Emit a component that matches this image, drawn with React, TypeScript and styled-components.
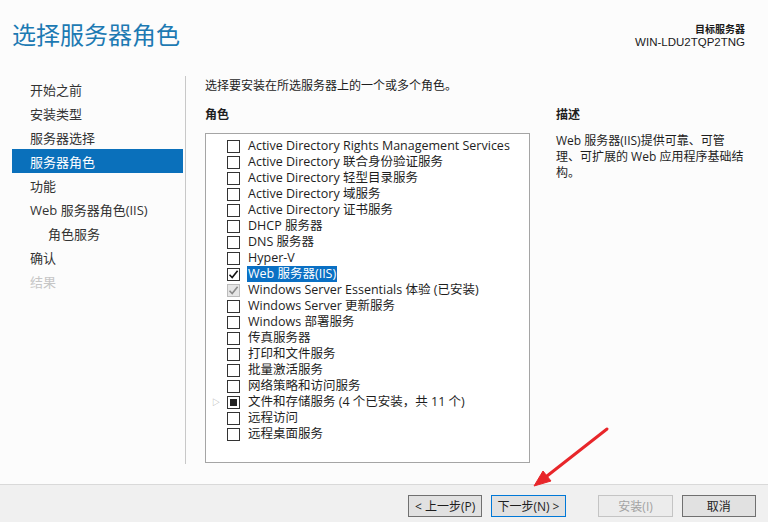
import styled, { createGlobalStyle } from 'styled-components';

const GlobalStyle = createGlobalStyle`
  html, body {
    margin: 0;
    padding: 0;
    background: #fcfcfc;
  }
  body {
    font-family: "Open Sans", "Noto Sans CJK SC", sans-serif;
    color: #1e1e1e;
  }
`;

type CheckState = 'off' | 'on' | 'installed' | 'partial';

interface Role {
  label: string;
  state: CheckState;
  selected?: boolean;
  expandable?: boolean;
}

const roles: Role[] = [
  { label: 'Active Directory Rights Management Services', state: 'off' },
  { label: 'Active Directory 联合身份验证服务', state: 'off' },
  { label: 'Active Directory 轻型目录服务', state: 'off' },
  { label: 'Active Directory 域服务', state: 'off' },
  { label: 'Active Directory 证书服务', state: 'off' },
  { label: 'DHCP 服务器', state: 'off' },
  { label: 'DNS 服务器', state: 'off' },
  { label: 'Hyper-V', state: 'off' },
  { label: 'Web 服务器(IIS)', state: 'on', selected: true },
  { label: 'Windows Server Essentials 体验 (已安装)', state: 'installed' },
  { label: 'Windows Server 更新服务', state: 'off' },
  { label: 'Windows 部署服务', state: 'off' },
  { label: '传真服务器', state: 'off' },
  { label: '打印和文件服务', state: 'off' },
  { label: '批量激活服务', state: 'off' },
  { label: '网络策略和访问服务', state: 'off' },
  { label: '文件和存储服务 (4 个已安装，共 11 个)', state: 'partial', expandable: true },
  { label: '远程访问', state: 'off' },
  { label: '远程桌面服务', state: 'off' },
];

const navItems = [
  { label: '开始之前' },
  { label: '安装类型' },
  { label: '服务器选择' },
  { label: '服务器角色', active: true },
  { label: '功能' },
  { label: 'Web 服务器角色(IIS)' },
  { label: '角色服务', sub: true },
  { label: '确认' },
  { label: '结果', disabled: true },
];

function CheckMark({ color }: { color: string }) {
  return (
    <svg width="11" height="11" viewBox="0 0 11 11">
      <path d="M1.5 5.8 L4.2 8.6 L9.6 1.8" fill="none" stroke={color} strokeWidth="1.6" />
    </svg>
  );
}

export default function App() {
  return (
    <>
      <GlobalStyle />
      <Window>
        <Header>
          <Title>选择服务器角色</Title>
          <Target>
            <TargetLabel>目标服务器</TargetLabel>
            <TargetName>WIN-LDU2TQP2TNG</TargetName>
          </Target>
        </Header>
        <Body>
          <Nav>
            {navItems.map((item) => (
              <NavItem
                key={item.label}
                $active={item.active}
                $sub={item.sub}
                $disabled={item.disabled}
              >
                {item.label}
              </NavItem>
            ))}
          </Nav>
          <Main>
            <Intro>选择要安装在所选服务器上的一个或多个角色。</Intro>
            <Columns>
              <RolesColumn>
                <SectionLabel>角色</SectionLabel>
                <RoleList>
                  {roles.map((role) => (
                    <RoleRow key={role.label}>
                      <Expander>{role.expandable ? '▷' : ''}</Expander>
                      <Box $state={role.state}>
                        {role.state === 'on' && <CheckMark color="#111" />}
                        {role.state === 'installed' && <CheckMark color="#8a8a8a" />}
                        {role.state === 'partial' && <Fill />}
                      </Box>
                      <RoleText $selected={role.selected}>{role.label}</RoleText>
                    </RoleRow>
                  ))}
                </RoleList>
              </RolesColumn>
              <DescColumn>
                <SectionLabel>描述</SectionLabel>
                <DescText>
                  Web 服务器(IIS)提供可靠、可管理、可扩展的 Web 应用程序基础结构。
                </DescText>
              </DescColumn>
            </Columns>
          </Main>
        </Body>
        <Footer>
          <Button>&lt; 上一步(P)</Button>
          <Button $primary>下一步(N) &gt;</Button>
          <Spacer />
          <Button disabled>安装(I)</Button>
          <Button>取消</Button>
        </Footer>
        <Arrow width="768" height="522" viewBox="0 0 768 522">
          <line x1="607" y1="429" x2="547" y2="476" stroke="#e8262a" strokeWidth="3" strokeLinecap="round" />
          <polygon points="534,486 551,481 543,471" fill="#e8262a" stroke="#e8262a" strokeWidth="1" strokeLinejoin="round" />
        </Arrow>
      </Window>
    </>
  );
}

const Window = styled.div`
  position: relative;
  width: 768px;
  height: 522px;
  display: flex;
  flex-direction: column;
  overflow: hidden;
  background: #fcfcfc;
`;

const Header = styled.div`
  height: 76px;
  box-sizing: border-box;
  display: flex;
  justify-content: space-between;
  align-items: flex-start;
  padding: 19px 23px 0 12px;
`;

const Title = styled.div`
  font-size: 24px;
  line-height: 30px;
  color: #1d7ab3;
  font-family: "Noto Sans CJK SC", sans-serif;
  font-weight: 400;
`;

const Target = styled.div`
  display: flex;
  flex-direction: column;
  align-items: flex-end;
  padding-top: 3px;
`;

const TargetLabel = styled.div`
  font-weight: 700;
  color: #1a1a1a;
  font-size: 10px;
  line-height: 13px;
  font-family: "Noto Sans CJK SC", sans-serif;
`;

const TargetName = styled.div`
  margin-top: 1px;
  color: #1a1a1a;
  font-family: "Liberation Sans", sans-serif;
  font-size: 11.5px;
  line-height: 13px;
`;

const Body = styled.div`
  height: 388px;
  display: flex;
`;

const Nav = styled.div`
  width: 173px;
  margin-left: 12px;
  padding-top: 1px;
  border-right: 1px solid #c8c8c8;
`;

const NavItem = styled.div<{ $active?: boolean; $sub?: boolean; $disabled?: boolean }>`
  height: 24px;
  width: 171px;
  display: flex;
  align-items: center;
  padding-left: ${(p) => (p.$sub ? 36 : 18)}px;
  box-sizing: border-box;
  font-size: 13px;
  color: ${(p) => (p.$active ? '#ffffff' : p.$disabled ? '#c6c6c6' : '#333333')};
  background: ${(p) => (p.$active ? '#0a70bb' : 'transparent')};
`;

const Main = styled.div`
  flex: 1;
  padding: 2px 0 0 19px;
  display: flex;
  flex-direction: column;
`;

const Intro = styled.div`
  font-size: 12px;
  line-height: 16px;
  color: #1e1e1e;
`;

const Columns = styled.div`
  display: flex;
  gap: 26px;
  margin-top: 13px;
`;

const RolesColumn = styled.div`
  width: 325px;
  display: flex;
  flex-direction: column;
`;

const SectionLabel = styled.div`
  font-size: 12px;
  line-height: 16px;
  font-weight: 700;
  color: #1e1e1e;
  margin-bottom: 10px;
`;

const RoleList = styled.div`
  height: 330px;
  box-sizing: border-box;
  border: 1px solid #a5a5a5;
  background: #ffffff;
  padding-top: 4px;
`;

const RoleRow = styled.div`
  height: 16px;
  display: flex;
  align-items: center;
  padding-left: 6px;
`;

const Expander = styled.span`
  width: 15px;
  font-size: 8px;
  color: #a0a0a0;
  line-height: 16px;
`;

const Box = styled.span<{ $state: CheckState }>`
  width: 13px;
  height: 13px;
  box-sizing: border-box;
  border: 1px solid ${(p) => (p.$state === 'installed' ? '#bcbcbc' : '#333333')};
  background: ${(p) => (p.$state === 'installed' ? '#e6e6e6' : '#ffffff')};
  display: flex;
  align-items: center;
  justify-content: center;
  flex-shrink: 0;
`;

const Fill = styled.span`
  width: 7px;
  height: 7px;
  background: #222222;
`;

const RoleText = styled.span<{ $selected?: boolean }>`
  margin-left: 7px;
  padding: 0 1px;
  font-size: 12.5px;
  line-height: 16px;
  white-space: nowrap;
  color: ${(p) => (p.$selected ? '#ffffff' : '#1e1e1e')};
  background: ${(p) => (p.$selected ? '#0a70c4' : 'transparent')};
`;

const DescColumn = styled.div`
  width: 192px;
  display: flex;
  flex-direction: column;
`;

const DescText = styled.div`
  font-size: 12px;
  line-height: 16px;
  color: #1e1e1e;
`;

const Footer = styled.div`
  margin-top: 20px;
  flex: 1;
  background: #f0f0f0;
  border-top: 1px solid #d9d9d9;
  display: flex;
  align-items: flex-start;
  padding: 10px 12px 0 408px;
  gap: 9px;
`;

const Spacer = styled.div`
  width: 15px;
`;

const Button = styled.button<{ $primary?: boolean }>`
  width: 75px;
  height: 22px;
  box-sizing: border-box;
  padding: 0;
  font-family: "Open Sans", "Noto Sans CJK SC", sans-serif;
  font-size: 12px;
  color: #1e1e1e;
  background: #e1e1e1;
  border: 1px solid ${(p) => (p.$primary ? '#0078d7' : '#707070')};
  display: flex;
  align-items: center;
  justify-content: center;

  &:disabled {
    background: #ececec;
    border-color: #c4c4c4;
    color: #a3a3a3;
  }
`;

const Arrow = styled.svg`
  position: absolute;
  left: 0;
  top: 0;
  pointer-events: none;
`;
